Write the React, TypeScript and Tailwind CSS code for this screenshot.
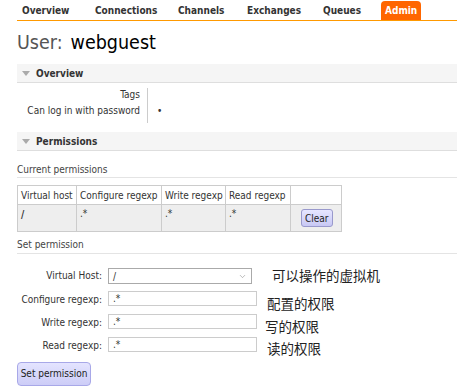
import { ChevronDown } from 'lucide-react';

const font = { fontFamily: '"DejaVu Sans Condensed", "DejaVu Sans", Verdana, sans-serif' };
const cjk = { fontFamily: '"Noto Sans CJK SC", "DejaVu Sans", sans-serif' };

function SectionHeader({ title }: { title: string }) {
  return (
    <div className="h-[19px] bg-[#f5f5f5] border-b border-[#dedede] flex items-center pl-[5px]">
      <span className="w-0 h-0 border-l-[4px] border-r-[4px] border-t-[5px] border-l-transparent border-r-transparent border-t-[#aaa]" />
      <span className="ml-[6px] text-[10px] font-bold text-[#333]">{title}</span>
    </div>
  );
}

function FormRow({ label, value, note, noteClass }: { label: string; value: string; note: string; noteClass: string }) {
  return (
    <div className="flex items-start h-[23px]">
      <div className="w-[85px] text-right text-[10px] text-[#333] leading-[15px] pt-[1px]">{label}</div>
      <input
        readOnly
        value={value}
        className="ml-[6px] w-[149px] h-[15px] border border-[#ccc] text-[10px] px-[4px] text-[#333] outline-none"
      />
      <span className={`text-[13.5px] text-[#222] leading-[16px] ${noteClass}`} style={cjk}>{note}</span>
    </div>
  );
}

export default function App() {
  const tabs = [
    { name: 'Overview', w: 'w-[73px]' },
    { name: 'Connections', w: 'w-[83px]' },
    { name: 'Channels', w: 'w-[69px]' },
    { name: 'Exchanges', w: 'w-[76px]' },
    { name: 'Queues', w: 'w-[63px]' },
  ];

  return (
    <div className="w-[457px] h-[392px] bg-white overflow-hidden pl-[17px] text-[#333]" style={font}>
      {/* Nav */}
      <div className="flex items-end h-[21px] border-b border-[#f90]">
        {tabs.map((t) => (
          <div key={t.name} className={`${t.w} pl-[5px] h-[20px] flex items-center text-[10px] font-bold text-[#333]`}>
            {t.name}
          </div>
        ))}
        <div className="h-[19px] px-[4px] flex items-center rounded-t-[4px] bg-[#f60] text-white text-[10px] font-bold">
          Admin
        </div>
      </div>

      {/* Title */}
      <div className="h-[43px] flex items-center text-[19.5px]">
        <span className="text-[#555]">User:</span>
        <span className="ml-[8px] text-black">webguest</span>
      </div>

      <SectionHeader title="Overview" />

      <div className="flex mt-[5px] text-[10px]">
        <div className="w-[130px] text-right pr-[7px]">
          <div className="h-[13px] leading-[13px]">Tags</div>
          <div className="h-[20px] leading-[20px]">Can log in with password</div>
        </div>
        <div className="border-l border-[#ccc] pl-[9px] h-[35px]">
          <div className="h-[13px]" />
          <div className="h-[20px] leading-[20px]">•</div>
        </div>
      </div>

      <div className="mt-[9px]">
        <SectionHeader title="Permissions" />
      </div>

      <div className="mt-[12px] text-[10px] text-[#444] border-b border-[#e4e4e4] h-[15px] leading-[13px]">
        Current permissions
      </div>

      <table className="mt-[7px] border-collapse table-fixed w-[324px] text-[10px] text-[#333] whitespace-nowrap">
        <colgroup>
          <col className="w-[59px]" />
          <col className="w-[85px]" />
          <col className="w-[64px]" />
          <col className="w-[65px]" />
          <col className="w-[51px]" />
        </colgroup>
        <thead>
          <tr className="h-[19px] bg-white">
            <th className="font-normal text-left border border-[#ccc] px-[3px]">Virtual host</th>
            <th className="font-normal text-left border border-[#ccc] px-[3px]">Configure regexp</th>
            <th className="font-normal text-left border border-[#ccc] px-[3px]">Write regexp</th>
            <th className="font-normal text-left border border-[#ccc] px-[3px]">Read regexp</th>
            <th className="border border-[#ccc]" />
          </tr>
        </thead>
        <tbody>
          <tr className="h-[27px] bg-[#eee] align-top">
            <td className="border border-[#ccc] px-[3px] pt-[2px] font-bold">/</td>
            <td className="border border-[#ccc] px-[3px] pt-[1px]">.*</td>
            <td className="border border-[#ccc] px-[3px] pt-[1px]">.*</td>
            <td className="border border-[#ccc] px-[3px] pt-[1px]">.*</td>
            <td className="border border-[#ccc] pl-[10px] pt-[4px]">
              <button className="h-[18px] px-[3px] rounded-[3px] border border-[#99c] bg-gradient-to-b from-[#e6e6ff] to-[#c8c8f4] text-[10px] text-[#222]">
                Clear
              </button>
            </td>
          </tr>
        </tbody>
      </table>

      <div className="mt-[6px] text-[10px] text-[#444] border-b border-[#e4e4e4] h-[16px] leading-[13px]">
        Set permission
      </div>

      <div className="mt-[14px]">
        <div className="flex items-start h-[23px]">
          <div className="w-[85px] text-right text-[10px] text-[#333] leading-[16px]">Virtual Host:</div>
          <div className="ml-[6px] w-[144px] h-[16px] border border-[#aaa] flex items-center justify-between px-[4px] text-[10px] bg-white">
            <span>/</span>
            <ChevronDown className="w-[9px] h-[9px] text-[#888]" strokeWidth={1.5} />
          </div>
          <span className="ml-[20px] -mt-[1px] text-[13.5px] text-[#222] leading-[16px]" style={cjk}>
            可以操作的虚拟机
          </span>
        </div>
        <FormRow label="Configure regexp:" value=".*" note="配置的权限" noteClass="ml-[10px] mt-[4px]" />
        <FormRow label="Write regexp:" value=".*" note="写的权限" noteClass="ml-[8px] mt-[4px]" />
        <FormRow label="Read regexp:" value=".*" note="读的权限" noteClass="ml-[10px] mt-[3px]" />
      </div>

      <button className="w-[74px] h-[24px] rounded-[4px] border border-[#a8a8e8] bg-gradient-to-b from-[#e4e4ff] to-[#cdcdf7] text-[10px] text-[#222]">
        Set permission
      </button>
    </div>
  );
}
